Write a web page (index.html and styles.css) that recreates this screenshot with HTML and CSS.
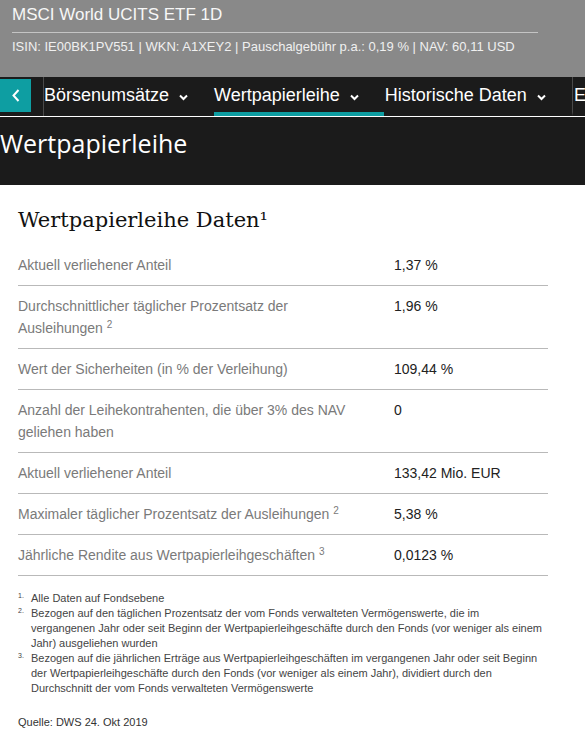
FILE: index.html
```html
<!DOCTYPE html>
<html lang="de">
<head>
    <meta charset="UTF-8">
    <title>Wertpapierleihe - MSCI World UCITS ETF 1D</title>
    <link rel="stylesheet" href="styles.css">
</head>
<body>

    <header class="fund-head">
        <div class="fund-title">MSCI World UCITS ETF 1D</div>
        <div class="fund-meta">ISIN: IE00BK1PV551 | WKN: A1XEY2 | Pauschalgebühr p.a.: 0,19 % | NAV: 60,11 USD</div>
    </header>

    <nav class="subnav">
        <a class="subnav-back" href="#">
            <svg width="8" height="13" viewBox="0 0 8 13"><path d="M6.5 1 L1.5 6.5 L6.5 12" fill="none" stroke="#fff" stroke-width="2"/></svg>
        </a>
        <ul class="subnav-list">
            <li class="subnav-item">Börsenumsätze
                <svg class="chev" width="9" height="7" viewBox="0 0 9 7"><path d="M1 1.5 L4.5 5 L8 1.5" fill="none" stroke="#fff" stroke-width="2"/></svg>
            </li>
            <li class="subnav-item active">Wertpapierleihe
                <svg class="chev" width="9" height="7" viewBox="0 0 9 7"><path d="M1 1.5 L4.5 5 L8 1.5" fill="none" stroke="#fff" stroke-width="2"/></svg>
            </li>
            <li class="subnav-item">Historische Daten
                <svg class="chev" width="9" height="7" viewBox="0 0 9 7"><path d="M1 1.5 L4.5 5 L8 1.5" fill="none" stroke="#fff" stroke-width="2"/></svg>
            </li>
            <li class="subnav-item subnav-last">Einzelwerte</li>
        </ul>
    </nav>

    <div class="page-title">
        <h1>Wertpapierleihe</h1>
    </div>

    <main class="content">
        <h2>Wertpapierleihe Daten¹</h2>

        <div class="data-table">
            <div class="row">
                <div class="label">Aktuell verliehener Anteil</div>
                <div class="value">1,37 %</div>
            </div>
            <div class="row">
                <div class="label">Durchschnittlicher täglicher Prozentsatz der Ausleihungen <sup>2</sup></div>
                <div class="value">1,96 %</div>
            </div>
            <div class="row">
                <div class="label">Wert der Sicherheiten (in % der Verleihung)</div>
                <div class="value">109,44 %</div>
            </div>
            <div class="row">
                <div class="label">Anzahl der Leihekontrahenten, die über 3% des NAV geliehen haben</div>
                <div class="value">0</div>
            </div>
            <div class="row">
                <div class="label">Aktuell verliehener Anteil</div>
                <div class="value">133,42 Mio. EUR</div>
            </div>
            <div class="row">
                <div class="label">Maximaler täglicher Prozentsatz der Ausleihungen <sup>2</sup></div>
                <div class="value">5,38 %</div>
            </div>
            <div class="row">
                <div class="label">Jährliche Rendite aus Wertpapierleihgeschäften <sup>3</sup></div>
                <div class="value">0,0123 %</div>
            </div>
        </div>

        <ol class="footnotes">
            <li><span class="fn-num">1.</span><span>Alle Daten auf Fondsebene</span></li>
            <li><span class="fn-num">2.</span><span>Bezogen auf den täglichen Prozentsatz der vom Fonds verwalteten Vermögenswerte, die im vergangenen Jahr oder seit Beginn der Wertpapierleihgeschäfte durch den Fonds (vor weniger als einem Jahr) ausgeliehen wurden</span></li>
            <li><span class="fn-num">3.</span><span>Bezogen auf die jährlichen Erträge aus Wertpapierleihgeschäften im vergangenen Jahr oder seit Beginn der Wertpapierleihgeschäfte durch den Fonds (vor weniger als einem Jahr), dividiert durch den Durchschnitt der vom Fonds verwalteten Vermögenswerte</span></li>
        </ol>

        <p class="source">Quelle: DWS 24. Okt 2019</p>
    </main>

</body>
</html>
```

FILE: styles.css
```css
body {
    margin: 0;
    padding: 0;
    background: #fff;
    font-family: 'Liberation Sans', Arial, sans-serif;
    color: #222;
    overflow: hidden;
}

/* Fondskopf */
.fund-head {
    background-color: #898989;
    padding: 5px 0 22px 12px;
    color: #fff;
}

.fund-title {
    width: 526px;
    font-size: 17px;
    line-height: 20px;
    padding-bottom: 7px;
    border-bottom: 1px solid #c4c4c4;
    color: #f7f7f7;
}

.fund-meta {
    margin-top: 6px;
    font-size: 13px;
    line-height: 16px;
    color: #f0f0f0;
    white-space: nowrap;
}

/* Unternavigation */
.subnav {
    display: flex;
    height: 39px;
    background-color: #1b1b1b;
    border-bottom: 1px solid #fff;
    overflow: hidden;
}

.subnav-back {
    flex: 0 0 31px;
    height: 33px;
    margin: 2px 12px 0 0;
    background-color: #0e9ea2;
    display: flex;
    align-items: center;
    justify-content: center;
}

.subnav-list {
    display: flex;
    margin: 0;
    padding: 0;
    list-style: none;
    border-left: 1px solid #4a4a4a;
    white-space: nowrap;
}

.subnav-item {
    display: flex;
    align-items: center;
    height: 33px;
    padding: 2px 25px 0 0;
    margin-right: 1px;
    border-bottom: 4px solid transparent;
    font-size: 18px;
    color: #fff;
}

.subnav-item:last-child {
    margin-right: 0;
}

.subnav-item.active {
    border-bottom-color: #0e9ea2;
}

.subnav-last {
    border-left: 1px solid #4a4a4a;
    padding-left: 1px;
}

.chev {
    margin: 3px 0 0 10px;
}

/* Seitentitel */
.page-title {
    background-color: #1b1b1b;
    padding: 9px 0 25px 0;
}

.page-title h1 {
    margin: 0;
    font-family: 'Open Sans', sans-serif;
    font-size: 25px;
    font-weight: normal;
    line-height: 34px;
    color: #fff;
}

/* Inhalt */
.content {
    padding: 20px 0 0 18px;
}

.content h2 {
    margin: 0 0 10px 0;
    font-family: 'DejaVu Serif', serif;
    font-size: 21px;
    font-weight: normal;
    line-height: 30px;
    color: #111;
}

.data-table {
    width: 530px;
}

.row {
    display: flex;
    padding: 9px 0;
    border-bottom: 1px solid #b9b9b9;
    font-size: 14px;
    line-height: 22px;
}

.label {
    flex: 0 0 345px;
    padding-right: 31px;
    color: #7a7a7a;
}

.label sup {
    font-size: 10px;
    line-height: 1;
    vertical-align: 5px;
}

.value {
    color: #222;
}

.footnotes {
    margin: 15px 0 0 0;
    padding: 0;
    list-style: none;
    width: 528px;
    font-size: 11px;
    line-height: 15px;
    color: #444;
}

.footnotes li {
    display: flex;
}

.fn-num {
    flex: 0 0 13px;
    font-size: 7px;
    line-height: 10px;
}

.source {
    margin: 19px 0 0 0;
    font-size: 11px;
    line-height: 15px;
    color: #333;
}
```
